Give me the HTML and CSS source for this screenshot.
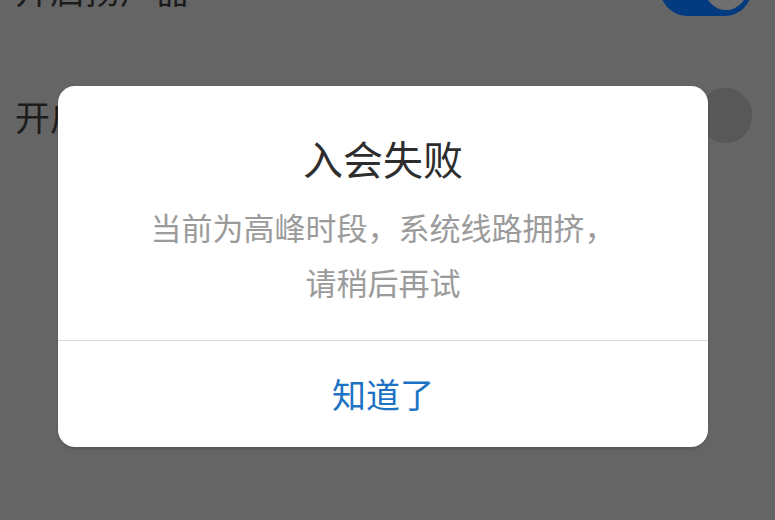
FILE: index.html
```html
<!DOCTYPE html>
<html lang="zh-CN">
<head>
<meta charset="utf-8">
<title>入会失败</title>
<link rel="stylesheet" href="styles.css">
</head>
<body>
<div class="settings">
  <div class="row">
    <span class="label">开启扬声器</span>
    <span class="toggle on"><span class="thumb"></span></span>
  </div>
  <div class="row">
    <span class="label">开启摄像头</span>
    <span class="toggle off"><span class="thumb"></span></span>
  </div>
</div>
<div class="dialog">
  <div class="body">
    <div class="title">入会失败</div>
    <div class="message">当前为高峰时段，系统线路拥挤，<br>请稍后再试</div>
  </div>
  <div class="actions">
    <span class="btn">知道了</span>
  </div>
</div>
</body>
</html>
```

FILE: styles.css
```css
html, body {
  margin: 0;
  padding: 0;
}
body {
  width: 775px;
  height: 520px;
  overflow: hidden;
  background: #656565;
  font-family: "Noto Sans CJK SC", "Noto Sans", sans-serif;
  position: relative;
}
.settings {
  display: flex;
  flex-direction: column;
  gap: 72px;
  margin-top: -39px;
  padding: 0 23px 0 15px;
}
.row {
  height: 55px;
  display: flex;
  align-items: center;
  justify-content: space-between;
}
.label {
  font-size: 35px;
  color: #1c1c1c;
  line-height: 1;
}
.toggle {
  width: 92px;
  height: 55px;
  border-radius: 28px;
  display: flex;
  align-items: center;
  box-sizing: border-box;
  padding: 0 5px;
}
.toggle.on {
  background: #033a80;
  justify-content: flex-end;
}
.toggle.off {
  background: #585858;
  width: 53px;
}
.thumb {
  width: 42px;
  height: 42px;
  border-radius: 50%;
  background: #6f6f6f;
}
.toggle.off .thumb {
  display: none;
}
.dialog {
  position: absolute;
  left: 58px;
  top: 86px;
  width: 650px;
  background: #ffffff;
  border-radius: 17px;
  box-shadow: 0 2px 3px rgba(0,0,0,0.15);
  display: flex;
  flex-direction: column;
}
.body {
  padding: 47px 40px 31px;
  display: flex;
  flex-direction: column;
  align-items: center;
  gap: 16px;
  border-bottom: 1px solid #dcdcdc;
}
.title {
  font-size: 40px;
  line-height: 50px;
  color: #2d2d2d;
}
.message {
  font-size: 31px;
  line-height: 55px;
  color: #9b9b9b;
  text-align: center;
}
.actions {
  height: 106px;
  display: flex;
  align-items: center;
  justify-content: center;
}
.btn {
  font-size: 34px;
  line-height: 40px;
  color: #1e72c4;
}
```
